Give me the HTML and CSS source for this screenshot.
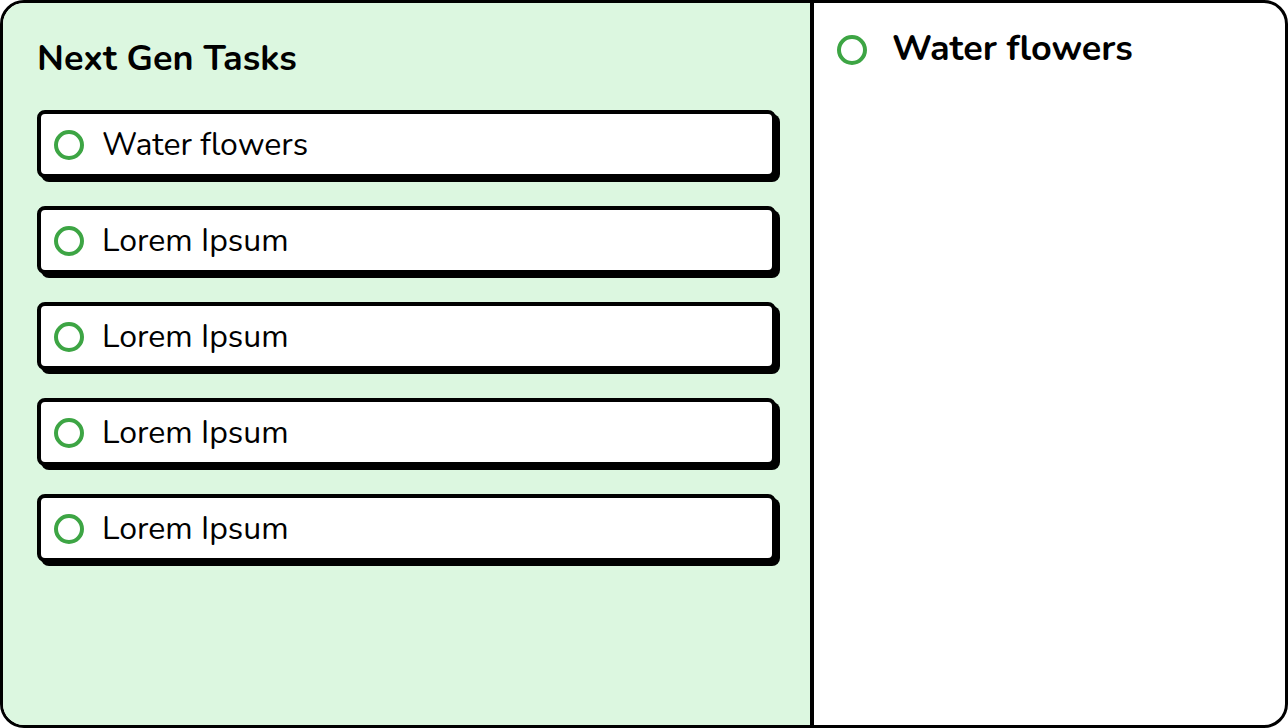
FILE: index.html
```html
<!DOCTYPE html>
<html lang="en">
<head>
<meta charset="utf-8">
<title>Next Gen Tasks</title>
<link rel="stylesheet" href="styles.css">
</head>
<body>
<div class="app">
  <section class="list-panel">
    <h1 class="title">Next Gen Tasks</h1>
    <ul class="tasks">
      <li class="task"><span class="ring"></span><span class="task-text">Water flowers</span></li>
      <li class="task"><span class="ring"></span><span class="task-text">Lorem Ipsum</span></li>
      <li class="task"><span class="ring"></span><span class="task-text">Lorem Ipsum</span></li>
      <li class="task"><span class="ring"></span><span class="task-text">Lorem Ipsum</span></li>
      <li class="task"><span class="ring"></span><span class="task-text">Lorem Ipsum</span></li>
    </ul>
  </section>
  <section class="detail-panel">
    <div class="detail-head"><span class="ring"></span><span class="detail-title">Water flowers</span></div>
  </section>
</div>
</body>
</html>
```
FILE: styles.css
```css
* { box-sizing: border-box; }
html, body { margin: 0; padding: 0; background: #ffffff; }
body { font-family: "Nunito", "Lato", "Noto Sans", sans-serif; color: #000; }

.app {
  display: flex;
  width: 1288px;
  height: 728px;
  border: 3px solid #000;
  border-radius: 24px;
  overflow: hidden;
  background: #fff;
}

.list-panel {
  width: 811px;
  flex: none;
  background: #dcf7e0;
  border-right: 4px solid #000;
  padding: 34px 34px 0 34px;
}

.title {
  margin: 0;
  font-size: 36px;
  font-weight: 700;
  line-height: 44px;
}

.tasks {
  list-style: none;
  margin: 29px 0 0 0;
  padding: 0;
  display: flex;
  flex-direction: column;
  gap: 28px;
}

.task {
  display: flex;
  align-items: center;
  height: 68px;
  background: #fff;
  border: 4px solid #000;
  border-radius: 8px;
  box-shadow: 4px 4px 0 #000;
  padding: 1px 0 0 13px;
}

.ring {
  flex: none;
  width: 30px;
  height: 30px;
  border: 4px solid #3da544;
  border-radius: 50%;
}

.task-text {
  margin-left: 18px;
  font-size: 32px;
  line-height: 1;
}

.detail-panel {
  flex: 1;
  padding: 30px 24px 0 23px;
}

.detail-head {
  display: flex;
  align-items: center;
}

.detail-title {
  margin-left: 25px;
  font-size: 36px;
  font-weight: 700;
  line-height: 1;
  margin-top: -2px;
}
```
